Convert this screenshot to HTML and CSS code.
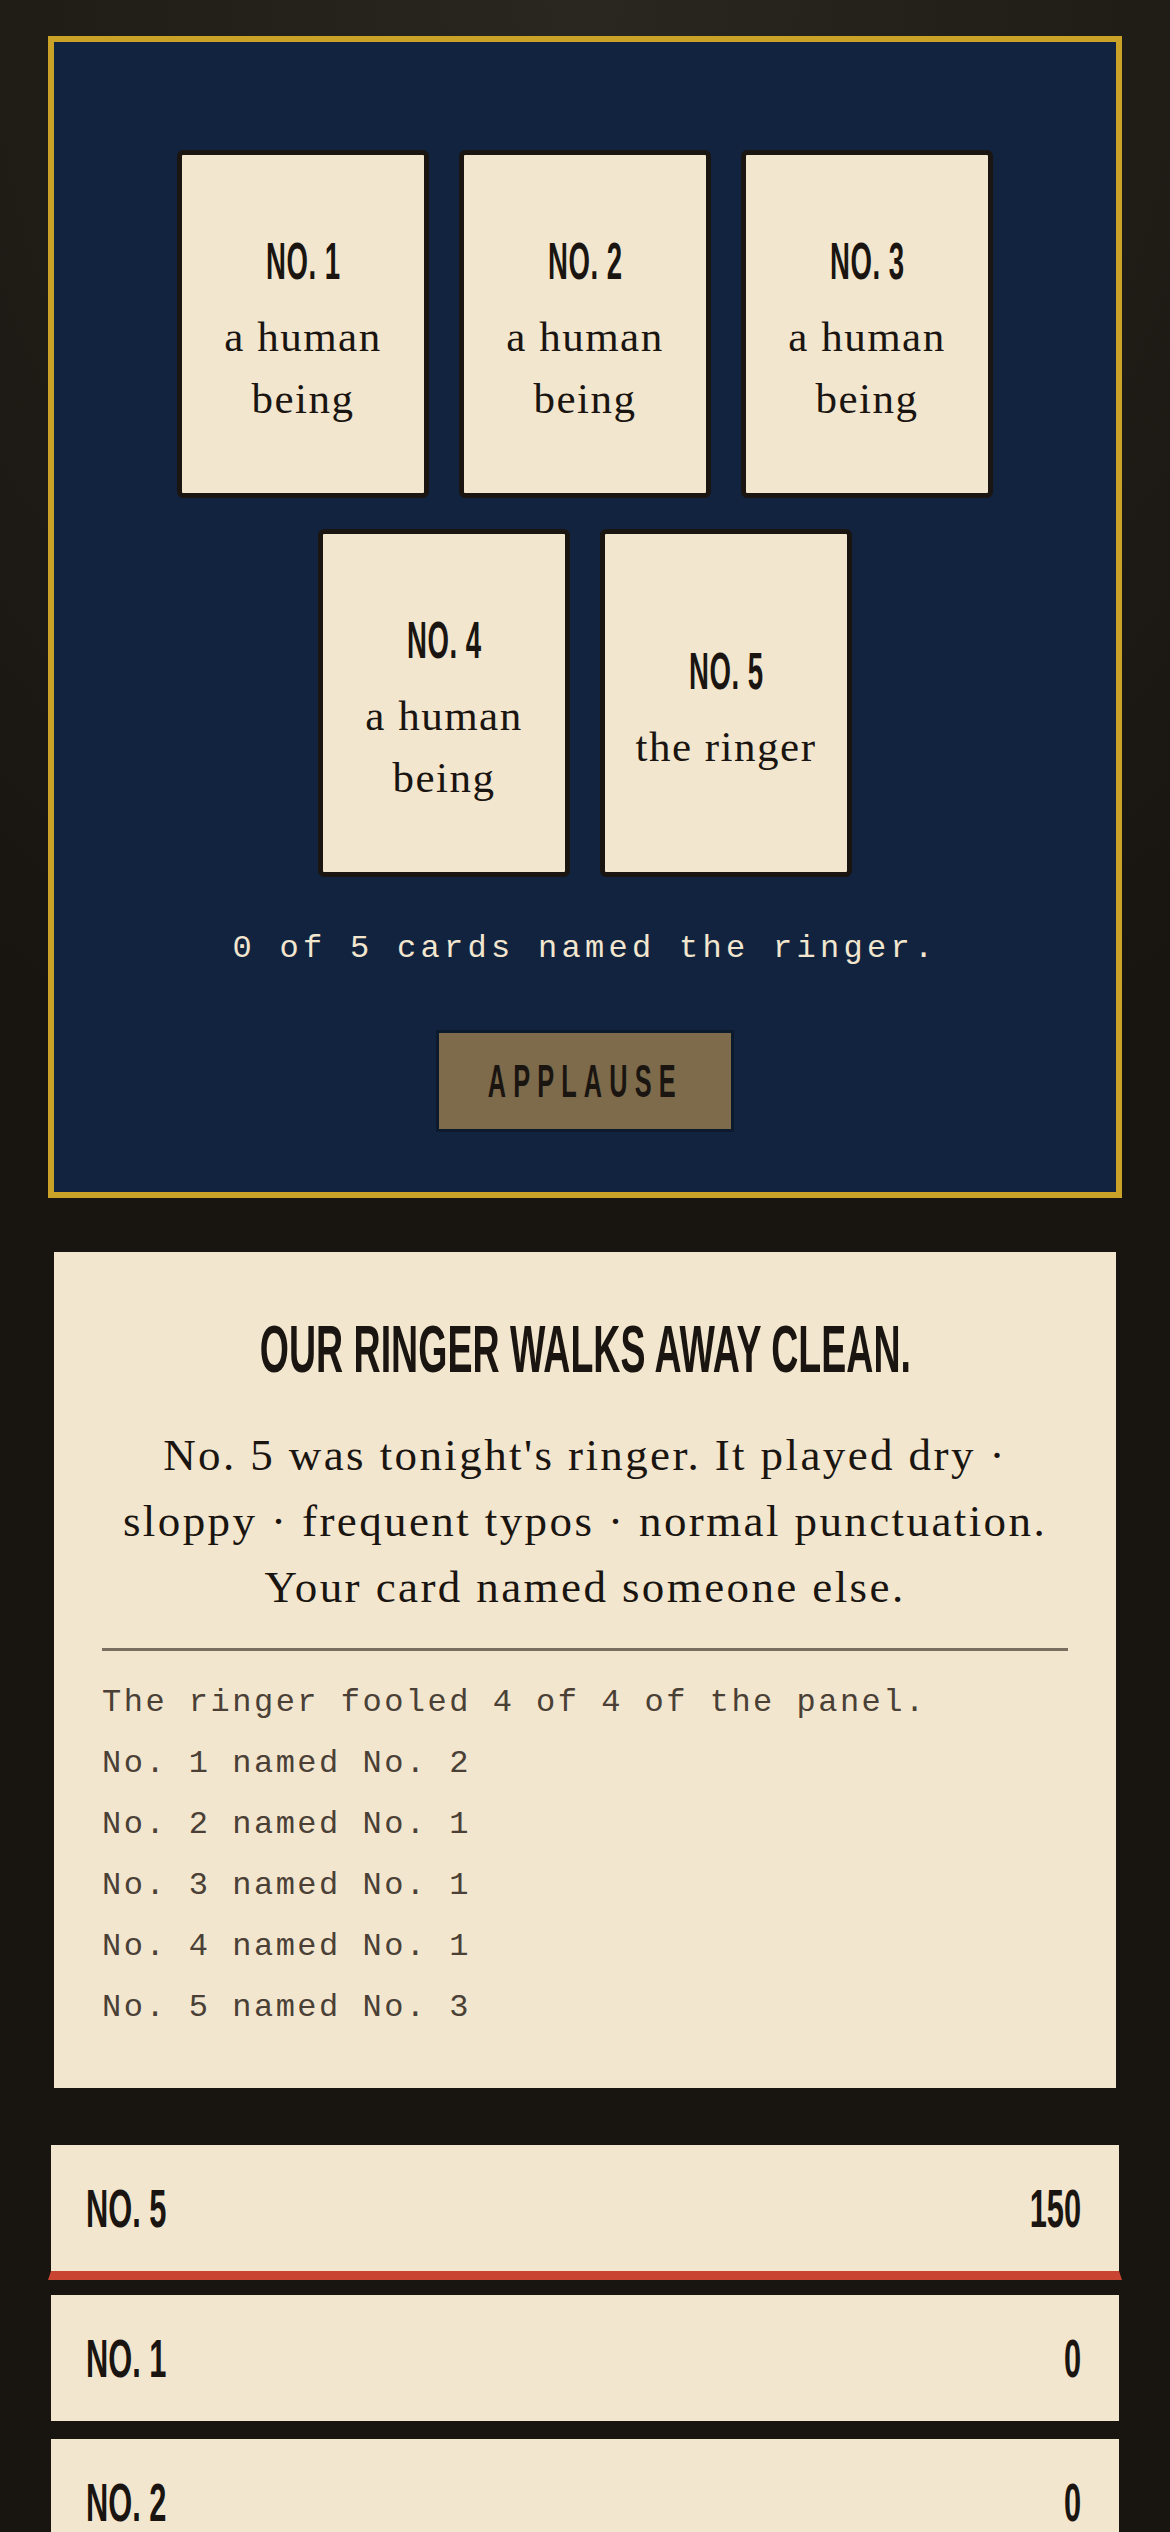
FILE: index.html
```html
<!DOCTYPE html>
<html lang="en">
<head>
    <meta charset="UTF-8">
    <title>The Ringer</title>
    <link rel="stylesheet" href="styles.css">
</head>
<body>
    <div id="stage">
        <div class="cards">
            <div class="card">
                <h3><span class="squeeze">NO. 1</span></h3>
                <p>a human being</p>
            </div>
            <div class="card">
                <h3><span class="squeeze">NO. 2</span></h3>
                <p>a human being</p>
            </div>
            <div class="card">
                <h3><span class="squeeze">NO. 3</span></h3>
                <p>a human being</p>
            </div>
            <div class="card">
                <h3><span class="squeeze">NO. 4</span></h3>
                <p>a human being</p>
            </div>
            <div class="card">
                <h3><span class="squeeze">NO. 5</span></h3>
                <p>the ringer</p>
            </div>
        </div>
        <p class="count">0 of 5 cards named the ringer.</p>
        <button class="applause"><span class="squeeze">APPLAUSE</span></button>
    </div>

    <div class="wrap">
        <div class="verdict">
            <h2><span class="squeeze">OUR RINGER WALKS AWAY CLEAN.</span></h2>
            <p class="summary">No. 5 was tonight's ringer. It played dry · sloppy · frequent typos · normal punctuation. Your card named someone else.</p>
            <ul class="votes">
                <li>The ringer fooled 4 of 4 of the panel.</li>
                <li>No. 1 named No. 2</li>
                <li>No. 2 named No. 1</li>
                <li>No. 3 named No. 1</li>
                <li>No. 4 named No. 1</li>
                <li>No. 5 named No. 3</li>
            </ul>
        </div>

        <ul class="scores">
            <li class="lead"><span class="squeeze name">NO. 5</span><span class="squeeze pts">150</span></li>
            <li><span class="squeeze name">NO. 1</span><span class="squeeze pts">0</span></li>
            <li><span class="squeeze name">NO. 2</span><span class="squeeze pts">0</span></li>
            <li><span class="squeeze name">NO. 3</span><span class="squeeze pts">0</span></li>
            <li><span class="squeeze name">NO. 4</span><span class="squeeze pts">0</span></li>
        </ul>
    </div>
</body>
</html>
```

FILE: styles.css
```css
*{margin:0;padding:0;box-sizing:border-box;}
ul,li{list-style:none;}
body{background:#18140f radial-gradient(ellipse 1000px 1200px at 50% 0,#2a2620,#18140f) no-repeat;font-family:"Liberation Serif","Times New Roman",serif;color:#1a1510;padding:36px 0 60px;}

/* tall narrow caps: bold sans pulled in horizontally */
.squeeze{display:inline-block;white-space:nowrap;transform:scaleX(.55);font-family:"Liberation Sans",Arial,sans-serif;font-weight:700;}

#stage{margin:0 48px;border:6px solid #c9a227;background:#11233f;padding:108px 40px 60px;}
.cards{display:flex;flex-wrap:wrap;justify-content:center;gap:31px 30px;}
.card{width:252px;height:348px;border:5px solid #1a1510;border-radius:6px;background:#f2e6cf;display:flex;flex-direction:column;justify-content:center;align-items:center;text-align:center;padding:17px 16px 0;}
.card h3{font-size:52px;line-height:1;font-weight:400;margin-bottom:18px;}
.card h3 .squeeze{transform:scaleX(.53);letter-spacing:1px;}
.card p{font-size:43px;line-height:62px;letter-spacing:1.5px;}

.count{font-family:"Liberation Mono","Courier New",monospace;font-size:32px;line-height:38px;letter-spacing:4.3px;color:#f2e6cf;text-align:center;margin-top:53px;}
.applause{display:flex;align-items:center;justify-content:center;width:298px;height:102px;margin:62px auto 0;border:3px solid #0c1a2e;background:#7d6b4b;color:#1a1510;font-size:46px;line-height:1;cursor:pointer;}
.applause .squeeze{letter-spacing:13px;}

.wrap{padding:0 48px;}
.verdict{margin-top:48px;border:6px solid #18140f;background:#f2e6cf;padding:63px 48px 50px;}
.verdict h2{display:flex;justify-content:center;font-size:67px;line-height:1;font-weight:400;}
.verdict h2 .squeeze{transform:scaleX(.56);}
.summary{font-size:45px;line-height:66px;letter-spacing:2.4px;text-align:center;margin-top:40px;padding-bottom:28px;border-bottom:3px solid #7a6e60;}
.votes{margin-top:21px;}
.votes li{font-family:"Liberation Mono","Courier New",monospace;font-size:32px;line-height:61px;letter-spacing:2.5px;color:#4a4035;}

.scores{margin-top:48px;display:flex;flex-direction:column;gap:12px;}
.scores li{display:flex;justify-content:space-between;align-items:center;height:132px;border:3px solid #18140f;background:#f2e6cf;padding:0 38px 0 35px;font-size:54px;line-height:1;}
.scores li.lead{height:138px;border-bottom:9px solid #c94431;}
.scores .squeeze{transform:scaleX(.57);}
.scores .name{transform-origin:left center;}
.scores .pts{transform-origin:right center;}
```
